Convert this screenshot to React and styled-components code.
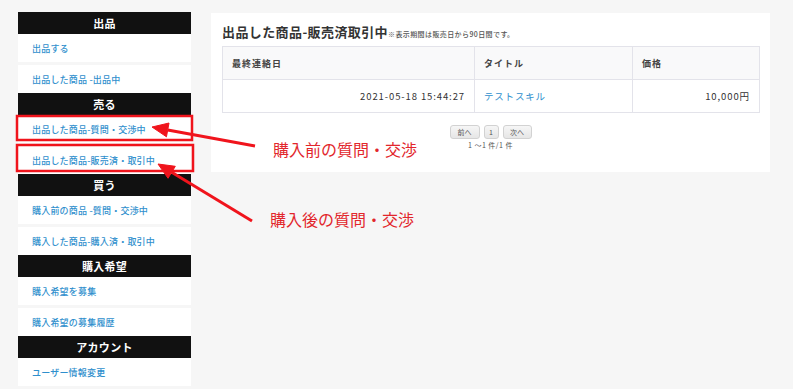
import React from "react";
import styled, { createGlobalStyle } from "styled-components";

const GlobalStyle = createGlobalStyle`
  html, body {
    margin: 0;
    padding: 0;
    background: #f6f6f6;
    font-family: "Noto Sans CJK JP", "Noto Sans", sans-serif;
  }
`;

const Page = styled.div`
  position: relative;
  width: 793px;
  height: 389px;
  overflow: hidden;
  display: flex;
  align-items: flex-start;
  gap: 20px;
  padding: 12px 0 0 18px;
  box-sizing: border-box;
`;

const Sidebar = styled.nav`
  width: 173px;
  display: flex;
  flex-direction: column;
`;

const SideHeader = styled.div`
  height: 22px;
  background: #111;
  color: #fff;
  font-size: 11px;
  font-weight: 700;
  display: flex;
  align-items: center;
  justify-content: center;
  letter-spacing: 0.3px;
`;

const SideItem = styled.a`
  height: 28px;
  background: #fff;
  color: #2f8fcd;
  font-size: 9px;
  font-weight: 500;
  letter-spacing: 0.2px;
  display: flex;
  align-items: center;
  padding-left: 14px;
  text-decoration: none;
  & + & {
    margin-top: 3px;
  }
`;

const Panel = styled.main`
  width: 559px;
  margin-top: 1px;
  background: #fff;
  padding: 10px 11px 22px;
  box-sizing: border-box;
`;

const Title = styled.h1`
  margin: 0 0 3px;
  font-size: 13px;
  font-weight: 700;
  color: #333;
  letter-spacing: 0.4px;
  line-height: 18px;
  display: flex;
  align-items: baseline;
`;

const Note = styled.span`
  font-size: 7px;
  font-weight: 500;
  color: #555;
  letter-spacing: 0.4px;
`;

const Table = styled.table`
  width: 537px;
  border-collapse: collapse;
  table-layout: fixed;
`;

const Th = styled.th`
  height: 33px;
  box-sizing: border-box;
  border: 1px solid #e3e3ea;
  background: #f9f9fa;
  color: #444;
  font-size: 9px;
  font-weight: 700;
  letter-spacing: 1px;
  text-align: left;
  padding: 0 9px;
  width: ${p => p.w}px;
`;

const Td = styled.td`
  height: 33px;
  box-sizing: border-box;
  border: 1px solid #e3e3ea;
  color: ${p => (p.link ? "#2f8fcd" : "#333")};
  font-size: 9.5px;
  letter-spacing: ${p => (p.link ? "0.8px" : "0.9px")};
  text-align: ${p => (p.right ? "right" : "left")};
  padding: 0 9px;
`;

const Pager = styled.div`
  display: flex;
  justify-content: center;
  gap: 4px;
  margin-top: 12px;
`;

const PageButton = styled.button`
  height: 14px;
  min-width: ${p => p.w}px;
  padding: 0;
  border: 1px solid #d2d2d2;
  border-radius: 3px;
  background: linear-gradient(#f6f6f6, #e6e6e6);
  color: #555;
  font-family: inherit;
  font-size: 7px;
  line-height: 12px;
`;

const Count = styled.div`
  text-align: center;
  font-size: 7px;
  color: #555;
  margin-top: 1px;
  letter-spacing: 0.5px;
`;

const Overlay = styled.svg`
  position: absolute;
  left: 0;
  top: 0;
  pointer-events: none;
`;

const Callout = styled.div`
  position: absolute;
  left: ${p => p.x}px;
  top: ${p => p.y}px;
  color: #e2262c;
  font-size: 16px;
  line-height: 20px;
  white-space: nowrap;
`;

const menu = [
  { head: "出品", items: ["出品する", "出品した商品 -出品中"] },
  { head: "売る", items: ["出品した商品-質問・交渉中", "出品した商品-販売済・取引中"] },
  { head: "買う", items: ["購入前の商品 -質問・交渉中", "購入した商品-購入済・取引中"] },
  { head: "購入希望", items: ["購入希望を募集", "購入希望の募集履歴"] },
  { head: "アカウント", items: ["ユーザー情報変更"] },
];

const Arrow = ({ x1, y1, x2, y2 }) => {
  const dx = x2 - x1;
  const dy = y2 - y1;
  const len = Math.hypot(dx, dy);
  const ux = dx / len;
  const uy = dy / len;
  const hl = 16;
  const hw = 7;
  const bx = x2 - ux * hl;
  const by = y2 - uy * hl;
  const pts = `${x2},${y2} ${bx - uy * hw},${by + ux * hw} ${bx + uy * hw},${by - ux * hw}`;
  return (
    <g fill="#f0141c" stroke="#f0141c">
      <line x1={x1} y1={y1} x2={bx} y2={by} strokeWidth="3" />
      <polygon points={pts} strokeWidth="1" />
    </g>
  );
};

export default function App() {
  return (
    <>
      <GlobalStyle />
      <Page>
        <Sidebar>
          {menu.map(sec => (
            <React.Fragment key={sec.head}>
              <SideHeader>{sec.head}</SideHeader>
              {sec.items.map(it => (
                <SideItem key={it}>{it}</SideItem>
              ))}
            </React.Fragment>
          ))}
        </Sidebar>
        <Panel>
          <Title>
            出品した商品-販売済取引中<Note>※表示期間は販売日から90日間です。</Note>
          </Title>
          <Table>
            <thead>
              <tr>
                <Th w={252}>最終連絡日</Th>
                <Th w={158}>タイトル</Th>
                <Th w={127}>価格</Th>
              </tr>
            </thead>
            <tbody>
              <tr>
                <Td right>2021-05-18 15:44:27</Td>
                <Td link>テストスキル</Td>
                <Td right>10,000円</Td>
              </tr>
            </tbody>
          </Table>
          <Pager>
            <PageButton w={30}>前へ</PageButton>
            <PageButton w={15}>1</PageButton>
            <PageButton w={29}>次へ</PageButton>
          </Pager>
          <Count>1 ～1 件/1 件</Count>
        </Panel>

        <Overlay width="793" height="389">
          <rect x="17" y="116" width="175" height="24" fill="none" stroke="#f0141c" strokeWidth="2.5" />
          <rect x="17" y="145" width="176" height="26" fill="none" stroke="#f0141c" strokeWidth="2.5" />
          <Arrow x1={255} y1={146} x2={152} y2={127} />
          <Arrow x1={252} y1={221} x2={158} y2={164} />
        </Overlay>
        <Callout x={273} y={139}>購入前の質問・交渉</Callout>
        <Callout x={270} y={209}>購入後の質問・交渉</Callout>
      </Page>
    </>
  );
}
